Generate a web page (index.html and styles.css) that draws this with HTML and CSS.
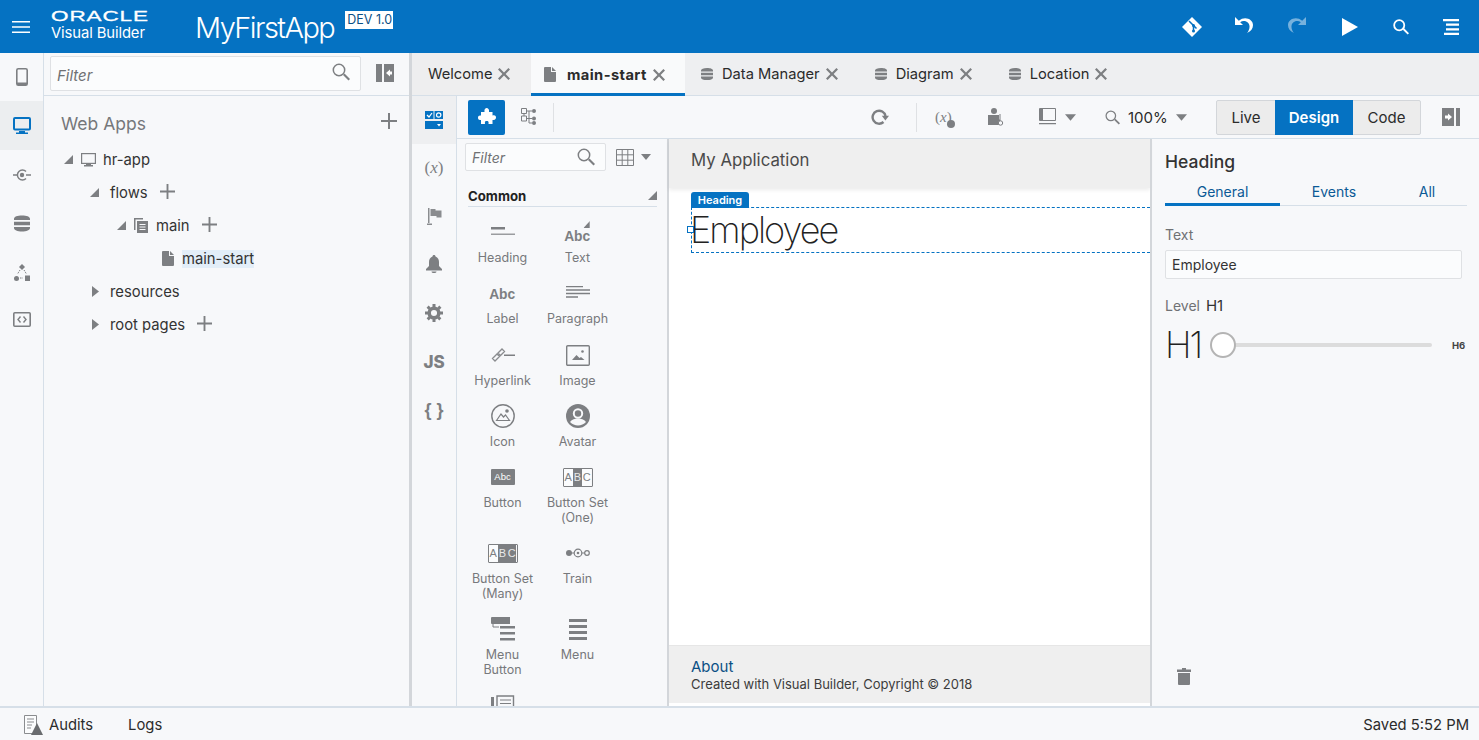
FILE: index.html
```html
<!DOCTYPE html>
<html lang="en">
<head>
    <meta charset="UTF-8">
    <title>MyFirstApp - Visual Builder</title>
    <link rel="stylesheet" href="styles.css">
</head>
<body>

<svg class="defs" width="0" height="0">
    <symbol id="i-plus" viewBox="0 0 16 16"><path d="M7 0h2v7h7v2H9v7H7V9H0V7h7z"/></symbol>
    <symbol id="i-close" viewBox="0 0 12 12"><path d="M1.6 0 6 4.4 10.400 0 12 1.600 7.600 6 12 10.400 10.400 12 6 7.600 1.600 12 0 10.400 4.400 6 0 1.600z"/></symbol>
    <symbol id="i-db" viewBox="0 0 14 14"><path d="M0 3c0-2 3-3 7-3s7 1 7 3v1H0zM0 5.500h14v3H0zM0 10h14v1c0 2-3 3-7 3s-7-1-7-3z"/></symbol>
    <symbol id="i-file" viewBox="0 0 12 15"><path d="M0 1a1 1 0 0 1 1-1h6v5h5v9a1 1 0 0 1-1 1H1a1 1 0 0 1-1-1zM8 0l4 4H8z"/></symbol>
    <symbol id="i-search" viewBox="0 0 18 18"><circle cx="7" cy="7" r="5.700" fill="none" stroke="currentColor" stroke-width="1.500"/><path d="m11 12 1.500-1.500 5.500 5.500-1.500 1.500z"/></symbol>
    <symbol id="i-caret" viewBox="0 0 10 6"><path d="M0 0h10L5 6z"/></symbol>
    <symbol id="i-open" viewBox="0 0 9 9"><path d="M9 0v9H0z"/></symbol>
    <symbol id="i-closed" viewBox="0 0 7 11"><path d="M0 0l7 5.500L0 11z"/></symbol>
</svg>

<header class="topbar">
    <svg class="hamburger" width="18" height="12" viewBox="0 0 18 12"><path d="M0 0h18v1.500H0zM0 5.200h18v1.500H0zM0 10.500h18V12H0z"/></svg>
    <div class="brand">
        <span class="brand-oracle">ORACLE</span>
        <span class="brand-vb">Visual Builder</span>
    </div>
    <span class="app-name">MyFirstApp</span>
    <span class="app-badge">DEV 1.0</span>
    <div class="top-actions">
        <svg width="22" height="22" viewBox="0 0 22 22"><path d="M11 1 21 11 11 21 1 11z" fill="#fff"/><path d="M8 5l4.500 4.500M12.500 9.500v6M12.500 9.500l3 3" stroke="#0571c1" stroke-width="1.500" fill="none"/><circle cx="12.500" cy="9.500" r="1.500" fill="#0571c1"/><circle cx="12.500" cy="15" r="1.500" fill="#0571c1"/></svg>
        <svg class="top-undo" width="20" height="18" viewBox="0 0 20 18"><path d="M1 1v8h8L6.200 6.200C9.500 3.800 15 5.500 15.500 10c.2 2.500-.8 5-2.500 7 4-1.500 6-4.500 6-8C19 3 10.500-.5 4.800 4.800z" fill="#fff"/></svg>
        <svg class="top-redo" width="20" height="18" viewBox="0 0 20 18"><path d="M19 1v8h-8l2.800-2.800C10.500 3.800 5 5.500 4.500 10c-.2 2.500.8 5 2.500 7-4-1.500-6-4.500-6-8C1 3 9.500-.5 15.200 4.800z" fill="#fff"/></svg>
        <svg class="top-play" width="16" height="18" viewBox="0 0 16 18"><path d="M0 0l16 9L0 18z" fill="#fff"/></svg>
        <svg class="top-search" width="16" height="16" viewBox="0 0 18 18"><circle cx="7" cy="7" r="5.700" fill="none" stroke="#fff" stroke-width="2"/><path d="m11 12 1.500-1.500 5.500 5.500-1.500 1.500z" fill="#fff"/></svg>
        <svg width="16" height="16" viewBox="0 0 16 16"><path d="M0 0h16v2.200H0zM3 4.600h13v2.200H3zM3 9.200h13v2.200H3zM1 13.800h15V16H1z" fill="#fff"/></svg>
    </div>
</header>

<div class="workspace">
    <nav class="rail">
        <div class="rail-item"><svg width="12" height="18" viewBox="0 0 12 18"><rect x=".8" y=".8" width="10.400" height="16.400" rx="1.500" fill="none" stroke="#7d7f82" stroke-width="1.600"/><path d="M1 14.500h10V17H1z" fill="#7d7f82"/></svg></div>
        <div class="rail-item active"><svg width="18" height="17" viewBox="0 0 18 17"><rect x="1" y="1" width="16" height="11.500" rx="1" fill="none" stroke="#0572c2" stroke-width="2"/><path d="M6 14h6v1.500h3V17H3v-1.500h3z" fill="#0572c2"/></svg></div>
        <div class="rail-item"><svg width="18" height="12" viewBox="0 0 18 12"><path d="M0 6h4M13 6h5" stroke="#7d7f82" stroke-width="1.500"/><path d="M13 2.500A5 5 0 1 0 13 9.500" fill="none" stroke="#7d7f82" stroke-width="1.500"/><circle cx="9" cy="6" r="2.200" fill="#7d7f82"/></svg></div>
        <div class="rail-item"><svg class="ic" width="16" height="17"><use href="#i-db"/></svg></div>
        <div class="rail-item"><svg width="16" height="17" viewBox="0 0 16 17"><path d="M8 0l3 3-3 3-3-3z" fill="#7d7f82"/><circle cx="2.500" cy="14.500" r="2.500" fill="#7d7f82"/><path d="M11 11.500h5V17h-5z" fill="#7d7f82"/><path d="M6 6 3.500 10M10 6l2.500 4M6 14h3" stroke="#7d7f82" stroke-dasharray="1.500 1" fill="none"/></svg></div>
        <div class="rail-item"><svg width="18" height="15" viewBox="0 0 18 15"><rect x=".8" y=".8" width="16.400" height="13.400" rx="1" fill="none" stroke="#7d7f82" stroke-width="1.600"/><path d="M7.500 4.500 5 7.500l2.500 3M10.500 4.500 13 7.500l-2.500 3" fill="none" stroke="#7d7f82" stroke-width="1.400"/></svg></div>
    </nav>

    <aside class="navigator">
        <div class="nav-top">
            <div class="filter nav-filter">
                <span class="filter-text">Filter</span>
                <svg class="ic" width="18" height="18"><use href="#i-search"/></svg>
            </div>
            <svg width="18" height="18" viewBox="0 0 18 18"><path d="M0 0h6v18H0zM8 0h10v18H8z" fill="#7d7f82"/><path d="M10 9l4-3.500v2h2v3h-2v2z" fill="#fff"/></svg>
        </div>
        <div class="nav-title">
            <span>Web Apps</span>
            <svg class="ic" width="16" height="16"><use href="#i-plus"/></svg>
        </div>
        <ul class="tree">
            <li class="tree-row depth0">
                <svg class="ic tw" width="9" height="9"><use href="#i-open"/></svg>
                <svg width="15" height="14" viewBox="0 0 15 14"><rect x=".6" y=".6" width="13.800" height="9.800" fill="none" stroke="#7d7f82" stroke-width="1.200"/><path d="M5 11h5v1h2v1.400H3V12h2z" fill="#7d7f82"/></svg>
                <span>hr-app</span>
            </li>
            <li class="tree-row depth1">
                <svg class="ic tw" width="9" height="9"><use href="#i-open"/></svg>
                <span>flows</span>
                <svg class="ic tree-plus" width="15" height="15"><use href="#i-plus"/></svg>
            </li>
            <li class="tree-row depth2">
                <svg class="ic tw" width="9" height="9"><use href="#i-open"/></svg>
                <svg width="14" height="15" viewBox="0 0 14 15"><path d="M0 0h9v1.500H1.500V12H0z" fill="#7d7f82"/><path d="M3 3h11v12H3z" fill="#7d7f82"/><path d="M5.500 6.500h6M5.500 9h6M5.500 11.500h6" stroke="#f7f8fa"/></svg>
                <span>main</span>
                <svg class="ic tree-plus" width="15" height="15"><use href="#i-plus"/></svg>
            </li>
            <li class="tree-row depth3">
                <svg class="ic" width="12" height="15"><use href="#i-file"/></svg>
                <span class="selected">main-start</span>
            </li>
            <li class="tree-row depth1">
                <svg class="ic tw tw-closed" width="7" height="11"><use href="#i-closed"/></svg>
                <span>resources</span>
            </li>
            <li class="tree-row depth1">
                <svg class="ic tw tw-closed" width="7" height="11"><use href="#i-closed"/></svg>
                <span>root pages</span>
                <svg class="ic tree-plus" width="15" height="15"><use href="#i-plus"/></svg>
            </li>
        </ul>
    </aside>

    <main class="editor">
        <div class="tabs">
            <div class="tab tab-welcome"><span>Welcome</span><svg class="ic" width="12" height="12"><use href="#i-close"/></svg></div>
            <div class="tab tab-active"><svg class="ic" width="12" height="15"><use href="#i-file"/></svg><span>main-start</span><svg class="ic" width="12" height="12"><use href="#i-close"/></svg></div>
            <div class="tab"><svg class="ic" width="12" height="14"><use href="#i-db"/></svg><span>Data Manager</span><svg class="ic" width="12" height="12"><use href="#i-close"/></svg></div>
            <div class="tab"><svg class="ic" width="12" height="14"><use href="#i-db"/></svg><span>Diagram</span><svg class="ic" width="12" height="12"><use href="#i-close"/></svg></div>
            <div class="tab"><svg class="ic" width="12" height="14"><use href="#i-db"/></svg><span>Location</span><svg class="ic" width="12" height="12"><use href="#i-close"/></svg></div>
        </div>

        <div class="editor-body">
            <div class="subrail">
                <div class="subrail-item active"><svg width="18" height="18" viewBox="0 0 18 18"><path d="M0 0h8.500v8H0zM9.500 0H18v8H9.500zM0 10h18v8H0z" fill="#0572c2"/><path d="m2 4 2 2 3-4" stroke="#fff" stroke-width="1.200" fill="none"/><circle cx="13.700" cy="4" r="2.200" fill="none" stroke="#fff" stroke-width="1.200"/><path d="M12 13h4l-2 2.500z" fill="#fff"/></svg></div>
                <div class="subrail-item subrail-x">(<i>x</i>)</div>
                <div class="subrail-item"><svg width="15" height="17" viewBox="0 0 15 17"><path d="M1 0h1.500v15H1zM0 15.500h5V17H0z" fill="#8a8c8f"/><path d="M3.500 1h5v1.500h6v7h-5V8h-6z" fill="#8a8c8f"/></svg></div>
                <div class="subrail-item"><svg width="16" height="18" viewBox="0 0 16 18"><path d="M8 0c1 0 1.500.7 1.500 1.500C12 2.500 13 4.500 13 7v4l3 3v1.500H0V14l3-3V7c0-2.500 1-4.500 3.500-5.500C6.500.7 7 0 8 0zM5.500 16.500h5C10.500 17.500 9.300 18 8 18s-2.500-.5-2.500-1.500z" fill="#7d7f82"/></svg></div>
                <div class="subrail-item wide"><svg width="18" height="18" viewBox="0 0 18 18"><circle cx="9" cy="9" r="4.800" fill="none" stroke="#7d7f82" stroke-width="3.500"/><path d="M9 0v18M0 9h18M2.600 2.600l12.800 12.800M15.400 2.600 2.600 15.400" stroke="#7d7f82" stroke-width="3" stroke-dasharray="3 12"/></svg></div>
                <div class="subrail-item wide subrail-js">JS</div>
                <div class="subrail-item wide subrail-brace">{ }</div>
            </div>

            <div class="design">
                <div class="toolbar">
                    <div class="tool-blue"><svg width="18" height="18" viewBox="0 0 18 18"><path d="M3 4h3.500C6 1 7.500 0 8.700 0S11.500 1 11 4h3.500v3.500c3-.7 3.500 1 3.500 2s-.5 3-3.500 2.500V16H10.500c.5-2.500-.5-3-1.800-3S6.500 13.500 7 16H3v-4C0 12.500 0 10.500 0 9.500S.5 7 3 7.500z" fill="#fff"/></svg></div>
                    <svg class="tool-tree" width="15" height="18" viewBox="0 0 15 18"><path d="M.5.500h5v5h-5zM.5 8h5v5h-5zM5.500 3H11M5.500 10.500H11M3 5.500V8M8 3v12h3" fill="none" stroke="#7d7f82"/><circle cx="13" cy="3" r="2" fill="#7d7f82"/><circle cx="13" cy="10.500" r="2" fill="#7d7f82"/><circle cx="13" cy="15" r="2" fill="#7d7f82"/></svg>
                    <span class="tool-sep sep-a"></span>
                    <svg class="tool-reload" width="18" height="16" viewBox="0 0 18 16"><path d="M14.500 7A6.500 6.500 0 1 0 12.500 13" fill="none" stroke="#7d7f82" stroke-width="2.400"/><path d="M10.800 6.800h7.200L14.400 11.500z" fill="#7d7f82"/></svg>
                    <span class="tool-sep sep-b"></span>
                    <span class="tool-vars">(<i>x</i>)<b></b></span>
                    <svg class="tool-user" width="17" height="18" viewBox="0 0 17 18"><circle cx="6" cy="3" r="3" fill="#7d7f82"/><path d="M0 7h11v4l1 1v5H0z" fill="#7d7f82"/><path d="M12 6v7" stroke="#7d7f82"/><circle cx="12.500" cy="15" r="2.200" fill="#f7f8fa" stroke="#7d7f82"/></svg>
                    <svg class="tool-view" width="17" height="18" viewBox="0 0 17 18"><path d="M.5.500h16v12H.5z" fill="none" stroke="#7d7f82"/><path d="M1 1h3v11H1zM0 15h17v1.200H0z" fill="#7d7f82"/></svg>
                    <svg class="ic tool-caret" width="11" height="7"><use href="#i-caret"/></svg>
                    <svg class="ic tool-zoom" width="15" height="15"><use href="#i-search"/></svg>
                    <span class="tool-pct">100%</span>
                    <svg class="ic tool-caret2" width="11" height="7"><use href="#i-caret"/></svg>
                    <div class="seg">
                        <span class="seg-live">Live</span>
                        <span class="seg-design">Design</span>
                        <span class="seg-code">Code</span>
                    </div>
                    <svg class="tool-collapse" width="18" height="18" viewBox="0 0 18 18"><path d="M0 0h12v18H0zM14 0h4v18h-4z" fill="#7d7f82"/><path d="M10 9 6 5.500v2H3v3h3v2z" fill="#fff"/></svg>
                </div>

                <div class="design-body">
                    <section class="palette">
                        <div class="palette-top">
                            <div class="filter palette-filter">
                                <span class="filter-text">Filter</span>
                                <svg class="ic" width="18" height="18"><use href="#i-search"/></svg>
                            </div>
                            <svg width="18" height="17" viewBox="0 0 18 17"><path d="M.5.500h17v16H.5zM6.200.500v16M11.800.500v16M.5 5.800h17M.5 11.200h17" fill="none" stroke="#7d7f82"/></svg>
                            <svg class="ic" width="10" height="6"><use href="#i-caret"/></svg>
                        </div>
                        <div class="palette-head">
                            <span>Common</span>
                            <svg class="ic" width="9" height="9"><use href="#i-open"/></svg>
                        </div>
                        <div class="palette-grid">
                            <div class="comp"><div class="comp-ic"><svg width="24" height="12" viewBox="0 0 24 12"><path d="M0 1h14v2.500H0z" fill="#7d7f82"/><path d="M0 7.500h24V9H0z" fill="#9a9c9f"/></svg></div><span>Heading</span></div>
                            <div class="comp"><div class="comp-ic comp-abc comp-text"><svg class="ic" width="7" height="7"><use href="#i-open"/></svg>Abc</div><span>Text</span></div>
                            <div class="comp"><div class="comp-ic comp-abc">Abc</div><span>Label</span></div>
                            <div class="comp"><div class="comp-ic"><svg width="24" height="14" viewBox="0 0 24 14"><path d="M0 .5h17M0 4h24M0 7.500h24M0 11h12" stroke="#7d7f82" stroke-width="1.300"/></svg></div><span>Paragraph</span></div>
                            <div class="comp"><div class="comp-ic"><svg width="24" height="14" viewBox="0 0 24 14"><path d="M1.500 10.500 6 6l2.500 2.500L4 13zM7 5l4-4 2.500 2.500-4 4z" fill="none" stroke="#8a8c8f" stroke-width="1.300"/><path d="M13 6.500h11V8H13z" fill="#7d7f82"/></svg></div><span>Hyperlink</span></div>
                            <div class="comp"><div class="comp-ic"><svg width="24" height="21" viewBox="0 0 24 21"><rect x=".7" y=".7" width="22.600" height="19.600" rx="1" fill="none" stroke="#7d7f82" stroke-width="1.400"/><path d="M6 15l4.500-5 3 3 1.500-1 3.500 3z" fill="#7d7f82"/><circle cx="16.500" cy="6.500" r="1.300" fill="#7d7f82"/></svg></div><span>Image</span></div>
                            <div class="comp"><div class="comp-ic"><svg width="24" height="24" viewBox="0 0 24 24"><circle cx="12" cy="12" r="11.200" fill="none" stroke="#7d7f82" stroke-width="1.400"/><path d="M5.500 16.500 10 10l2.500 3 2-2 4 5.500z" fill="none" stroke="#7d7f82" stroke-width="1.200"/><circle cx="16" cy="7" r="1.800" fill="#7d7f82"/></svg></div><span>Icon</span></div>
                            <div class="comp"><div class="comp-ic"><svg width="24" height="24" viewBox="0 0 24 24"><circle cx="12" cy="12" r="12" fill="#7d7f82"/><circle cx="12" cy="9.500" r="4.200" fill="none" stroke="#f7f8fa" stroke-width="2"/><path d="M4 18c2-3 5-3.500 8-3.500s6 .5 8 3.500c-2 2-5 3.500-8 3.500S6 20 4 18z" fill="#f7f8fa"/></svg></div><span>Avatar</span></div>
                            <div class="comp"><div class="comp-ic"><span class="mini-btn">Abc</span></div><span>Button</span></div>
                            <div class="comp"><div class="comp-ic"><span class="mini-set"><i>A</i><b>B</b><i>C</i></span></div><span>Button Set<br>(One)</span></div>
                            <div class="comp"><div class="comp-ic"><span class="mini-set mini-many"><i>A</i><b>B</b><b>C</b></span></div><span>Button Set<br>(Many)</span></div>
                            <div class="comp"><div class="comp-ic"><svg width="24" height="10" viewBox="0 0 24 10"><circle cx="3" cy="5" r="3" fill="#7d7f82"/><path d="M5 5h3M16 5h3" stroke="#7d7f82"/><circle cx="12" cy="5" r="3.800" fill="none" stroke="#7d7f82" stroke-width="1.200"/><circle cx="12" cy="5" r="1.300" fill="#7d7f82"/><circle cx="21" cy="5" r="2.300" fill="none" stroke="#7d7f82" stroke-width="1.200"/></svg></div><span>Train</span></div>
                            <div class="comp"><div class="comp-ic"><svg width="24" height="24" viewBox="0 0 24 24"><path d="M1 0h18v7H1a1 1 0 0 1-1-1V1a1 1 0 0 1 1-1z" fill="#7d7f82"/><path d="M9 9h15v2.500H9zM9 15h15v2.500H9zM9 21h15v2.500H9z" fill="#7d7f82"/><path d="M2 7v3h6" fill="none" stroke="#7d7f82"/></svg></div><span>Menu<br>Button</span></div>
                            <div class="comp"><div class="comp-ic"><svg width="18" height="22" viewBox="0 0 18 22"><path d="M0 1h18v3H0zM0 7h18v3H0zM0 13h18v3H0zM0 19h18v3H0z" fill="#7d7f82"/></svg></div><span>Menu</span></div>
                            <div class="comp"><div class="comp-ic"><svg width="24" height="20" viewBox="0 0 24 20"><path d="M0 2h3v18H0z" fill="#7d7f82"/><path d="M6 1h16.500v18H6z" fill="none" stroke="#7d7f82" stroke-width="1.400"/><path d="M9 5h11M9 8.500h11M11 12h9" stroke="#7d7f82"/></svg></div></div>
                        </div>
                    </section>

                    <section class="canvas">
                        <div class="app-head">My Application</div>
                        <div class="app-main">
                            <div class="heading-box">
                                <span class="heading-tag">Heading</span>
                                <span class="heading-handle"></span>
                                <h1>Employee</h1>
                            </div>
                        </div>
                        <div class="app-foot">
                            <a>About</a>
                            <p>Created with Visual Builder, Copyright © 2018</p>
                        </div>
                    </section>

                    <section class="props">
                        <h2>Heading</h2>
                        <div class="prop-tabs">
                            <span class="on">General</span>
                            <span class="ev">Events</span>
                            <span class="all">All</span>
                        </div>
                        <label class="prop-label">Text</label>
                        <div class="prop-input">Employee</div>
                        <div class="level"><span class="prop-label">Level</span><span class="level-val">H1</span></div>
                        <div class="slider">
                            <span class="slider-h1">H1</span>
                            <div class="slider-track"><span class="slider-thumb"></span></div>
                            <span class="slider-h6">H6</span>
                        </div>
                        <svg class="trash" width="14" height="17" viewBox="0 0 14 17"><path d="M5 0h4v1.500h5V4H0V1.500h5zM1 5h12v11a1 1 0 0 1-1 1H2a1 1 0 0 1-1-1z" fill="#7d7f82"/></svg>
                    </section>
                </div>
            </div>
        </div>
    </main>
</div>

<footer class="statusbar">
    <svg width="19" height="20" viewBox="0 0 19 20"><path d="M.5.500h12v18H.5z" fill="#fbfcfd" stroke="#8a8c8f"/><path d="M3 4h7M3 7h7M3 10h5M3 13h4" stroke="#8a8c8f"/><path d="M13 8l6 12H7z" fill="#6a6c6f"/></svg>
    <span class="status-audits">Audits</span>
    <span class="status-logs">Logs</span>
    <span class="status-saved">Saved 5:52 PM</span>
</footer>

</body>
</html>
```

FILE: styles.css
```css
* {
    box-sizing: border-box;
}

html, body {
    margin: 0;
    height: 740px;
    overflow: hidden;
}

body {
    display: flex;
    flex-direction: column;
    font-family: Inter, "Liberation Sans", sans-serif;
    font-size: 15px;
    color: #2b2b2b;
    background: #f7f8fa;
}

.defs {
    position: absolute;
}

.ic {
    fill: #7d7f82;
    color: #7d7f82;
    flex: none;
}

/* top bar */
.topbar {
    height: 53px;
    flex: none;
    background: #0572c2;
    color: #fff;
    display: flex;
    align-items: center;
    padding-left: 12px;
}

.hamburger {
    fill: #fff;
}

.brand {
    margin: 0 0 3px 21px;
    width: 144px;
    display: flex;
    flex-direction: column;
}

.brand-oracle {
    font-family: "Liberation Sans", sans-serif;
    font-size: 15px;
    line-height: 16px;
    letter-spacing: .6px;
    -webkit-text-stroke: .3px #fff;
    transform: scaleX(1.5);
    transform-origin: left;
}

.brand-vb {
    font-size: 14.800px;
    line-height: 19px;
    letter-spacing: -.1px;
}

.app-name {
    margin-top: 2px;
    font-size: 29px;
    font-weight: 300;
    letter-spacing: -1.550px;
}

.app-badge {
    align-self: flex-start;
    margin: 11px 0 0 11px;
    height: 18px;
    padding: 0 2px;
    width: 48px;
    background: #fff;
    color: #0b4f85;
    font-size: 12.500px;
    line-height: 18px;
    text-align: center;
    white-space: nowrap;
}

.top-actions {
    margin-left: auto;
    padding-right: 20px;
    display: flex;
    align-items: center;
    gap: 33px;
}

.top-undo,
.top-redo {
    margin-bottom: 4px;
}

.top-undo {
    margin-left: -2px;
}

.top-redo {
    opacity: .45;
}

.top-play {
    margin-left: 2px;
}

.top-search {
    margin: 0 1px 0 2px;
}

/* columns */
.workspace {
    flex: 1;
    min-height: 0;
    display: flex;
}

.rail {
    width: 44px;
    flex: none;
    border-right: 1px solid #d6dfe8;
}

.rail-item {
    height: 49px;
    display: flex;
    align-items: center;
    justify-content: center;
}

.rail-item:first-child {
    height: 48px;
}

.rail-item:last-child {
    height: 45px;
}

.rail-item.active {
    background: #eceef0;
}

.navigator {
    width: 368px;
    flex: none;
    border-right: 3px solid #d3d6da;
}

.nav-top {
    height: 43px;
    padding: 3px 15px 0 6px;
    border-bottom: 1px solid #d6dfe8;
    display: flex;
    align-items: flex-start;
    gap: 15px;
}

.nav-top > svg {
    margin-top: 8px;
}

.filter {
    display: flex;
    align-items: center;
    justify-content: space-between;
    background: #fbfcfd;
    border: 1px solid #dfe1e4;
    border-radius: 2px;
}

.filter-text {
    font-style: italic;
    color: #6f7174;
    font-size: 15px;
}

.nav-filter {
    width: 311px;
    height: 35px;
    padding: 0 10px 0 6px;
}

.nav-filter .filter-text {
    margin-top: 3px;
}

.nav-filter svg {
    margin-bottom: 4px;
}

.nav-title {
    height: 47px;
    padding: 7px 12px 0 17px;
    display: flex;
    align-items: center;
    justify-content: space-between;
    font-size: 17.500px;
    color: #75777a;
}

.nav-title svg {
    margin-bottom: 4px;
}

.tree {
    list-style: none;
    margin: 0;
    padding: 0;
}

.tree-row {
    height: 33px;
    display: flex;
    align-items: center;
    gap: 7px;
    color: #333;
    font-size: 14.800px;
}

.tree-plus {
    margin: 0 0 3px 5px;
}

.tw {
    margin-right: 8px;
}

.depth0 {
    padding-left: 20px;
}

.depth0 .tw {
    margin-right: 1px;
}

.depth1 {
    padding-left: 46px;
}

.depth1 .tw {
    margin-right: 4px;
}

.depth1 .tw-closed {
    margin-left: 2px;
}

.depth2 {
    padding-left: 73px;
}

.depth2 .tw {
    margin-right: 1px;
}

.depth2 span {
    margin-left: 1px;
}

.depth3 {
    padding-left: 118px;
    gap: 8px;
}

.selected {
    background: #e3eef8;
}

.editor {
    flex: 1;
    min-width: 0;
    display: flex;
    flex-direction: column;
}

/* tabs */
.tabs {
    height: 43px;
    flex: none;
    background: #eeeff1;
    border-bottom: 1px solid #d6dfe8;
    display: flex;
}

.tab {
    display: flex;
    align-items: center;
    gap: 9px;
    padding: 0 21px 0 16px;
    color: #2b2b2b;
    font-size: 14.700px;
}

.tab > span {
    margin-right: -3px;
    white-space: nowrap;
}

.tab-welcome {
    width: 119px;
    padding-left: 16px;
    background: #eeeeef;
}

.tab-active {
    width: 154px;
    padding: 3px 0 0 13px;
    background: #f9fafb;
    border-bottom: 3px solid #0572c2;
    height: 43px;
}

.tab-active > span {
    font-weight: 700;
    margin-left: 2px;
    letter-spacing: .4px;
}

.editor-body {
    flex: 1;
    min-height: 0;
    display: flex;
}

.subrail {
    width: 45px;
    flex: none;
    border-right: 1px solid #d6dfe8;
}

.subrail-item {
    height: 48px;
    display: flex;
    align-items: center;
    justify-content: center;
    color: #7d7f82;
}

.subrail-item.wide {
    height: 49px;
}

.subrail-item.active {
    background: #eeeff1;
}

.subrail-x {
    font-family: "Liberation Serif", serif;
    font-size: 17px;
}

.subrail-js {
    font-weight: 800;
    font-size: 17px;
}

.subrail-brace {
    font-family: "Liberation Sans", sans-serif;
    font-weight: 700;
    font-size: 18px;
}

.design {
    flex: 1;
    min-width: 0;
    display: flex;
    flex-direction: column;
}

/* toolbar */
.toolbar {
    height: 43px;
    flex: none;
    border-bottom: 1px solid #d6dfe8;
    display: flex;
    align-items: center;
    padding-left: 11px;
}

.tool-blue {
    width: 37px;
    height: 35px;
    background: #0572c2;
    border-radius: 2px;
    display: flex;
    align-items: center;
    justify-content: center;
}

.tool-tree { margin-left: 16px; }
.tool-sep {
    width: 1px;
    height: 29px;
    background: #dfe1e4;
}
.sep-a { margin-left: 17px; }
.tool-reload { margin-left: 317px; }
.sep-b { margin-left: 27px; }

.tool-vars {
    margin-left: 18px;
    width: 20px;
    font-family: "Liberation Serif", serif;
    font-size: 15px;
    color: #7d7f82;
    position: relative;
}

.tool-vars b {
    position: absolute;
    right: 0;
    bottom: -2px;
    width: 8px;
    height: 8px;
    border-radius: 50%;
    background: #7d7f82;
}

.tool-user { margin-left: 33px; }
.tool-view { margin-left: 34px; }
.tool-caret { margin-left: 9px; }
.tool-zoom { margin-left: 29px; }

.tool-pct {
    margin-left: 8px;
    font-size: 15px;
    width: 37px;
}

.tool-caret2 { margin-left: 11px; }

.seg {
    margin-left: 29px;
    height: 35px;
    display: flex;
    border: 1px solid #d3d6da;
    border-radius: 2px;
    background: #ececec;
    font-size: 15px;
    line-height: 34px;
    text-align: center;
}

.seg-live { width: 58px; }
.seg-code { width: 67px; }

.seg-design {
    width: 78px;
    background: #0572c2;
    color: #fff;
    font-weight: 600;
    margin: -1px 0;
    line-height: 36px;
}

.tool-collapse { margin-left: 21px; }

.design-body {
    flex: 1;
    min-height: 0;
    display: flex;
}

/* palette */
.palette {
    width: 212px;
    flex: none;
    border-right: 2px solid #d3d6da;
    overflow: hidden;
    padding: 4px 0 0 8px;
}

.palette-top {
    display: flex;
    align-items: center;
    gap: 10px;
}

.palette-top > svg:first-of-type {
    margin-right: -3px;
}

.palette-filter {
    width: 141px;
    height: 28px;
    padding: 0 10px 0 6px;
}

.palette-filter .filter-text {
    font-size: 14px;
}

.palette-head {
    margin: 17px 10px 0 3px;
    height: 19px;
    border-bottom: 1px solid #d6dfe8;
    display: flex;
    justify-content: space-between;
    align-items: flex-start;
    font-size: 13.200px;
    font-weight: 700;
    line-height: 16px;
    color: #222;
}

.palette-head svg {
    margin-top: 3px;
}

.palette-grid {
    margin-top: 11px;
    display: grid;
    grid-template-columns: 75px 75px;
    grid-template-rows: 61px 62px 61px 61px 76px 76px 76px 40px;
}

.comp {
    display: flex;
    flex-direction: column;
    align-items: center;
    text-align: center;
    font-size: 12.500px;
    line-height: 15px;
    color: #77797c;
}

.comp-ic {
    height: 28px;
    display: flex;
    align-items: center;
    justify-content: center;
    margin-bottom: 4px;
    position: relative;
}

.comp-abc {
    font-family: "Liberation Sans", sans-serif;
    font-weight: 700;
    font-size: 15px;
    color: #7d7f82;
    transform: scaleX(.92);
}

.comp-text {
    padding-top: 6px;
}

.comp-text svg {
    position: absolute;
    right: 0;
    top: 3px;
}

.mini-btn {
    width: 24px;
    height: 16px;
    background: #7d7f82;
    border-radius: 1px;
    color: #fff;
    font-size: 9.500px;
    line-height: 16px;
    font-family: "Liberation Sans", sans-serif;
}

.mini-set {
    width: 30px;
    height: 19px;
    display: flex;
    border: 1px solid #7d7f82;
    border-radius: 1px;
    font-size: 11px;
    line-height: 17px;
    font-family: "Liberation Sans", sans-serif;
    overflow: hidden;
}

.mini-set i,
.mini-set b {
    flex: 1;
    font-style: normal;
    font-weight: 400;
}

.mini-set i {
    background: #fbfcfd;
    color: #7d7f82;
}

.mini-set b {
    background: #7d7f82;
    color: #e8e9ea;
}

/* canvas */
.canvas {
    width: 481px;
    flex: none;
    background: #fff;
    display: flex;
    flex-direction: column;
    padding-bottom: 3px;
}

.app-head {
    height: 49px;
    flex: none;
    background: #efefef;
    box-shadow: 0 2px 4px rgba(0, 0, 0, .08);
    padding: 11px 0 0 22px;
    font-size: 16.800px;
    color: #4a4a4a;
}

.app-main {
    flex: 1;
    padding: 19px 0 0 22px;
}

.heading-box {
    position: relative;
    height: 46px;
    border: 1px dashed #0572c2;
    border-right: 0;
}

.heading-tag {
    position: absolute;
    left: -1px;
    top: -16px;
    width: 58px;
    height: 16px;
    background: #0572c2;
    border-radius: 3px 3px 0 0;
    color: #fff;
    font-size: 11px;
    font-weight: 600;
    line-height: 17px;
    text-align: center;
}

.heading-handle {
    position: absolute;
    left: -5px;
    top: 18px;
    width: 7px;
    height: 7px;
    background: #fff;
    border: 1px solid #0572c2;
}

.heading-box h1 {
    margin: 0 0 0 -2px;
    font-size: 36px;
    font-weight: 200;
    line-height: 44px;
    letter-spacing: -1.950px;
    color: #222;
}

.app-foot {
    height: 58px;
    flex: none;
    background: #efefef;
    border-top: 1px solid #e6e6e6;
    padding: 11px 0 0 22px;
}

.app-foot a {
    display: block;
    font-size: 15px;
    line-height: 19px;
    color: #0b4f85;
}

.app-foot p {
    margin: 0;
    font-size: 13px;
    line-height: 17px;
    color: #3c3c3c;
}

/* properties */
.props {
    flex: 1;
    min-width: 0;
    position: relative;
    border-left: 2px solid #d3d6da;
    padding: 13px 12px 0 13px;
}

.props h2 {
    margin: 0;
    font-size: 17.500px;
    font-weight: 500;
    line-height: 20px;
    color: #333;
}

.prop-tabs {
    margin-top: 10px;
    height: 24px;
    display: flex;
    border-bottom: 1px solid #d6dfe8;
    font-size: 14px;
    color: #0b5a96;
    text-align: center;
    line-height: 20px;
}

.prop-tabs span {
    display: block;
}

.prop-tabs .on {
    width: 115px;
    height: 24px;
    border-bottom: 3px solid #0572c2;
}

.prop-tabs .ev { width: 108px; }
.prop-tabs .all { width: 78px; }

.prop-label {
    display: block;
    color: #6f7174;
    font-size: 14px;
    line-height: 18px;
}

.props > .prop-label {
    margin-top: 20px;
}

.prop-input {
    margin-top: 6px;
    width: 297px;
    height: 29px;
    padding-left: 6px;
    background: #fbfcfd;
    border: 1px solid #dfe1e4;
    border-radius: 2px;
    font-size: 14px;
    line-height: 27px;
    color: #333;
}

.level {
    margin-top: 18px;
    display: flex;
    gap: 6px;
}

.level-val {
    font-size: 15px;
    line-height: 17px;
    color: #333;
}

.slider {
    margin-top: 10px;
    display: flex;
    align-items: center;
}

.slider-h1 {
    width: 45px;
    font-size: 36px;
    font-weight: 200;
    line-height: 40px;
    letter-spacing: -2px;
    color: #222;
}

.slider-track {
    position: relative;
    width: 222px;
    height: 4px;
    background: #dcdcdc;
    border-radius: 2px;
}

.slider-thumb {
    position: absolute;
    left: 0;
    top: -11px;
    width: 26px;
    height: 26px;
    background: #fff;
    border: 2px solid #b4b4b4;
    border-radius: 50%;
}

.slider-h6 {
    margin-left: 20px;
    font-size: 9.500px;
    font-weight: 700;
    color: #444;
}

.trash {
    position: absolute;
    left: 25px;
    top: 529px;
}

/* status bar */
.statusbar {
    height: 34px;
    flex: none;
    border-top: 2px solid #d6dfe8;
    padding: 1px 10px 0 24px;
    display: flex;
    align-items: center;
    color: #2b2b2b;
    font-size: 14.800px;
}

.status-audits { margin-left: 6px; }
.status-logs { margin-left: 35px; }
.status-saved { margin-left: auto; }
```
